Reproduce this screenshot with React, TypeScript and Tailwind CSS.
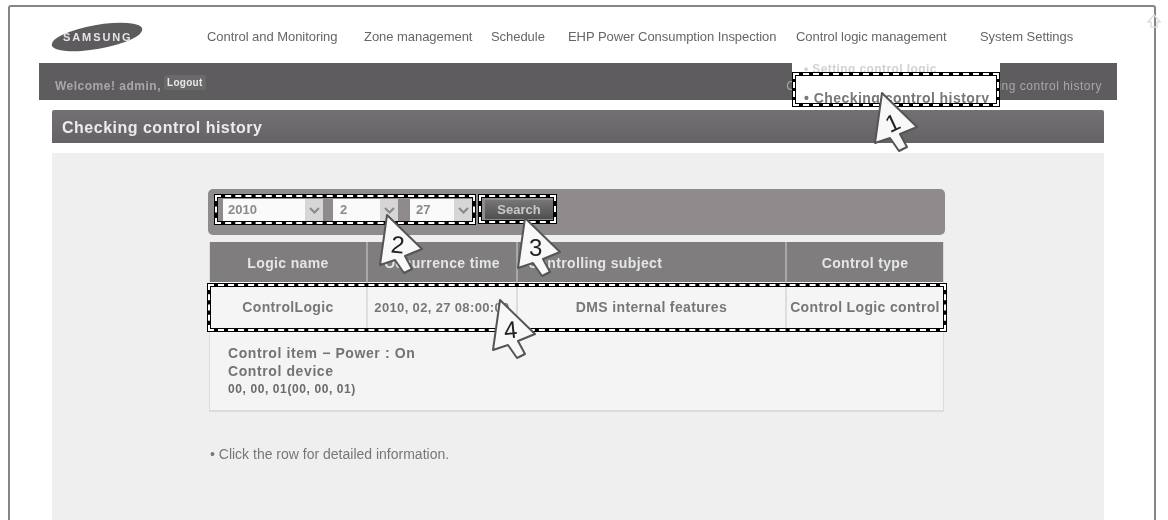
const NAV = [
  { label: 'Control and Monitoring', width: 'w-[157px]' },
  { label: 'Zone management', width: 'w-[127px]' },
  { label: 'Schedule', width: 'w-[77px]' },
  { label: 'EHP Power Consumption Inspection', width: 'w-[228px]' },
  { label: 'Control logic management', width: 'w-[184px]' },
  { label: 'System Settings', width: 'w-[92px]' },
];

const COLUMNS = [
  { label: 'Logic name', width: 'w-[158px]', align: 'justify-center' },
  { label: 'Occurrence time', width: 'w-[150px]', align: 'justify-center' },
  { label: 'Controlling subject', width: 'w-[269px]', align: 'justify-start pl-[10px]' },
  { label: 'Control type', width: 'flex-1', align: 'justify-center' },
];

const ROW = ['ControlLogic', '2010, 02, 27 08:00:00', 'DMS internal features', 'Control Logic control'];

function Marked({ className }: { className: string }) {
  return (
    <div className={`absolute border-4 border-black ${className}`}>
      <div className="absolute -inset-[3px] border-2 border-dashed border-white" />
    </div>
  );
}

function Cursor({ n, className, tilt }: { n: number; className: string; tilt: string }) {
  return (
    <svg className={`absolute ${className}`} width="52" height="64" viewBox="-9 -1 52 64">
      <path
        d="M0 0 L35 34 L18 41 L25 54 L17 58 L8 45 L-7 50 Z"
        fill="#f8f8f8"
        stroke="#555"
        strokeWidth="2"
        strokeLinejoin="round"
      />
      <text x="4" y="38" fontSize="24" fill="#222" fontFamily="'Liberation Sans', sans-serif" transform={tilt}>
        {n}
      </text>
    </svg>
  );
}

function DateSelect({ value, width, pad }: { value: string; width: string; pad: string }) {
  return (
    <div className={`flex h-[22px] items-center justify-between bg-[#fafafa] ${pad} ${width}`}>
      <span className="text-[13px] font-bold text-[#8a8a8a]">{value}</span>
      <span className="flex h-full w-[18px] items-center justify-center bg-[#d6d6d6]">
        <svg width="11" height="7" viewBox="0 0 11 7">
          <path d="M1 1 L5.5 5.5 L10 1" fill="none" stroke="#888" strokeWidth="2" />
        </svg>
      </span>
    </div>
  );
}

export default function App() {
  return (
    <div className="relative h-[520px] w-[1168px] overflow-hidden bg-white font-['Liberation_Sans',sans-serif] blur-[0.7px]">
      <div className="ml-[8px] mt-[5px] h-[515px] w-[1148px] rounded-t-[3px] border-2 border-b-0 border-[#858585] bg-white">
        <div className="flex h-[56px] items-center pl-[197px] pt-[4px]">
          {NAV.map((item) => (
            <span
              key={item.label}
              className={`shrink-0 whitespace-nowrap text-[13px] tracking-[-0.05px] text-[#666] ${item.width}`}
            >
              {item.label}
            </span>
          ))}
        </div>

        <div className="ml-[29px] flex h-[37px] w-[1078px] items-center justify-between bg-[#5e5c5e] pl-[16px] pr-[15px] pt-[8px] text-[12px] text-[#a8a8a8]">
          <div className="flex items-center gap-[3px]">
            <span className="font-bold tracking-[0.5px]">Welcome! admin,</span>
            <span className="-mt-[7px] rounded-[2px] bg-[#696969] px-[3px] text-[10px] font-bold tracking-[0.3px] text-[#e8e8e8]">Logout</span>
          </div>
          <span className="tracking-[0.5px]">
            Control logic management<span className="mx-[8px]">&gt;</span>Checking control history
          </span>
        </div>

        <div className="ml-[42px] mt-[10px] flex h-[33px] w-[1052px] items-center rounded-t-[2px] bg-gradient-to-b from-[#727072] to-[#656365] pl-[10px] pt-[3px] text-[16px] font-bold tracking-[0.5px] text-[#ececec]">
          Checking control history
        </div>

        <div className="ml-[42px] mt-[10px] h-[367px] w-[1052px] bg-[#efefef] pl-[156px] pt-[36px]">
          <div className="flex h-[46px] w-[737px] items-start gap-[10px] rounded-[5px] bg-[#8f8b8c] pl-[15px] pt-[10px]">
            <DateSelect value="2010" width="w-[100px]" pad="pl-[5px]" />
            <DateSelect value="2" width="w-[65px]" pad="pl-[7px]" />
            <DateSelect value="27" width="w-[62px]" pad="ml-[2px] pl-[6px]" />
            <button
              type="button"
              className="ml-[3px] mt-[1px] h-[19px] w-[68px] rounded-[1px] bg-gradient-to-b from-[#777] to-[#4f4f4f] text-[13px] font-bold text-[#c8c8c8]"
            >
              Search
            </button>
          </div>

          <div className="ml-[1px] mt-[7px] w-[735px] border-x border-b-2 border-[#dcdcdc]">
            <div className="flex h-[40px] bg-[#7f7d7e]">
              {COLUMNS.map((col) => (
                <div
                  key={col.label}
                  className={`flex items-center border-r-2 border-[#a9a7a8] pt-[2px] text-[14px] font-bold tracking-[0.35px] text-[#e6e6e6] last:border-r-0 ${col.align} ${col.width}`}
                >
                  {col.label}
                </div>
              ))}
            </div>
            <div className="flex h-[49px] bg-[#f5f5f5]">
              {ROW.map((cell, i) => (
                <div
                  key={cell}
                  className={`flex items-center justify-center whitespace-nowrap border-r-2 border-[#dddddd] pt-[2px] font-bold tracking-[0.35px] text-[#777] last:border-r-0 ${i === 1 ? 'text-[13px]' : 'text-[14px]'} ${COLUMNS[i].width}`}
                >
                  {cell}
                </div>
              ))}
            </div>
            <div className="h-[79px] bg-[#f4f4f4] pl-[18px] pt-[13px] text-[14px] font-bold leading-[18px] tracking-[0.6px] text-[#737373]">
              <div>Control item − Power : On</div>
              <div>Control device</div>
              <div className="text-[12px] text-[#6b6b6b]">00, 00, 01(00, 00, 01)</div>
            </div>
          </div>

          <p className="ml-[2px] mt-[32px] text-[14px] text-[#777]">
            • Click the row for detailed information.
          </p>
        </div>
      </div>

      <div className="absolute left-[792px] top-[52px] flex h-[55px] w-[208px] flex-col bg-white pl-[12px] pt-[8px]">
        <span className="text-[12px] font-bold tracking-[0.4px] text-[#d2d2d2]">• Setting control logic</span>
        <span className="mt-[10px] text-[14px] font-bold tracking-[0.45px] text-[#777]">• Checking control history</span>
      </div>

      <Marked className="left-[792px] top-[72px] h-[35px] w-[208px]" />
      <Marked className="left-[214px] top-[194px] h-[31px] w-[262px]" />
      <Marked className="left-[478px] top-[194px] h-[30px] w-[79px]" />
      <Marked className="left-[207px] top-[283px] h-[49px] w-[740px]" />

      <Cursor n={1} className="left-[873px] top-[92px]" tilt="rotate(-25 11 30)" />
      <Cursor n={2} className="left-[378px] top-[214px]" tilt="rotate(6 11 30)" />
      <Cursor n={3} className="left-[516px] top-[217px]" tilt="rotate(0)" />
      <Cursor n={4} className="left-[491px] top-[299px]" tilt="rotate(-6 11 30)" />

      <svg className="absolute left-[48px] top-[17px]" width="98" height="40" viewBox="0 0 98 40">
        <ellipse cx="49" cy="20" rx="46" ry="12" fill="#5d5b5d" transform="rotate(-10 49 20)" />
        <text x="15" y="24" fontSize="11" fontWeight="700" letterSpacing="1.9" fill="#e4e4e4" fontFamily="'Liberation Sans', sans-serif">
          SAMSUNG
        </text>
      </svg>

      <svg className="absolute left-[1147px] top-[13px]" width="14" height="16" viewBox="0 0 14 16">
        <path d="M7 2 L13 9 H10 V14 H4 V9 H1 Z" fill="none" stroke="#dedede" strokeWidth="1.5" />
      </svg>
    </div>
  );
}
